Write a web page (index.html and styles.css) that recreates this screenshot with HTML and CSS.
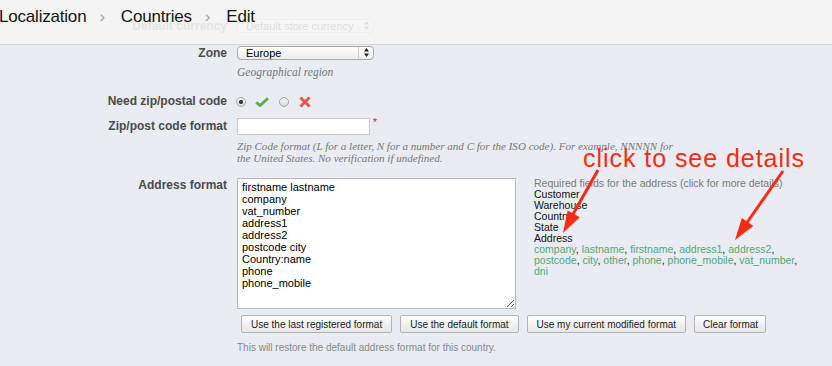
FILE: index.html
```html
<!DOCTYPE html>
<html lang="en">
    <head>
        <link rel="stylesheet" href="styles.css">
        <meta charset="UTF-8">
        <title>Countries &gt; Edit</title>
    </head>
    <body>
        <div class="toolbar">
            <span class="crumb first">Localization</span>
            <span class="sep">&rsaquo;</span>
            <span class="crumb">Countries</span>
            <span class="sep">&rsaquo;</span>
            <span class="crumb">Edit</span>
        </div>

        <form class="country-form">
            <div class="row row-currency">
                <label class="field-label" for="currency">Default currency</label>
                <div class="field">
                    <div class="select-box">
                        <select id="currency"><option>Default store currency</option></select>
                        <svg class="select-arrows" width="5" height="9" viewBox="0 0 5 9"><path d="M0 3.5 L2.5 0 L5 3.5Z M0 5.5 L5 5.5 L2.5 9Z" fill="#222"/></svg>
                    </div>
                </div>
            </div>

            <div class="row row-zone">
                <label class="field-label" for="zone">Zone</label>
                <div class="field">
                    <div class="select-box">
                        <select id="zone"><option>Europe</option></select>
                        <svg class="select-arrows" width="5" height="9" viewBox="0 0 5 9"><path d="M0 3.5 L2.5 0 L5 3.5Z M0 5.5 L5 5.5 L2.5 9Z" fill="#222"/></svg>
                    </div>
                    <p class="hint">Geographical region</p>
                </div>
            </div>

            <div class="row row-need-zip">
                <label class="field-label">Need zip/postal code</label>
                <div class="field switch">
                    <input type="radio" class="radio" name="need-zip" id="need-zip-on" checked>
                    <label for="need-zip-on" class="icon-yes">
                        <svg width="14" height="10" viewBox="0 0 14 10"><path d="M1.2 5.2 L5 8.6 L13 1.2" fill="none" stroke="#5cb043" stroke-width="2.8" stroke-linejoin="round"/></svg>
                    </label>
                    <input type="radio" class="radio" name="need-zip" id="need-zip-off">
                    <label for="need-zip-off" class="icon-no">
                        <svg width="12" height="12" viewBox="0 0 12 12"><path d="M1.5 1.5 L10.5 10.5 M10.5 1.5 L1.5 10.5" fill="none" stroke="#ef5350" stroke-width="3"/></svg>
                    </label>
                </div>
            </div>

            <div class="row row-zip-format">
                <label class="field-label" for="zip-format">Zip/post code format</label>
                <div class="field">
                    <input type="text" class="text-input" id="zip-format"><sup class="required">*</sup>
                    <p class="hint zip-hint">Zip Code format (L for a letter, N for a number and C for the ISO code). For example, NNNNN for the United States. No verification if undefined.</p>
                </div>
            </div>

            <div class="row row-address">
                <label class="field-label" for="address-format">Address format</label>
                <div class="field">
                    <div class="address-wrap">
                        <textarea id="address-format">firstname lastname
company
vat_number
address1
address2
postcode city
Country:name
phone
phone_mobile</textarea>
                        <div class="required-fields">
                            <div class="required-title">Required fields for the address (click for more details)</div>
                            <div>Customer</div>
                            <div>Warehouse</div>
                            <div>Country</div>
                            <div>State</div>
                            <div>Address</div>
                            <div class="field-links">
                                <a>company</a>, <a>lastname</a>, <a>firstname</a>, <a>address1</a>, <a>address2</a>, <a>postcode</a>, <a>city</a>, <a>other</a>, <a>phone</a>, <a>phone_mobile</a>, <a>vat_number</a>, <a>dni</a>
                            </div>
                        </div>
                    </div>
                    <div class="format-buttons">
                        <button type="button">Use the last registered format</button>
                        <button type="button">Use the default format</button>
                        <button type="button">Use my current modified format</button>
                        <button type="button" class="clear-btn">Clear format</button>
                    </div>
                    <p class="note">This will restore the default address format for this country.</p>
                </div>
            </div>
        </form>

        <div class="callout">click to see details</div>
        <svg class="callout-arrows" width="832" height="366" viewBox="0 0 832 366">
            <line x1="598" y1="170" x2="572" y2="216" stroke="#fb2a12" stroke-width="3"/>
            <polygon points="579.8,217.2 567.6,210.4 563,233" fill="#fb2a12"/>
            <line x1="783" y1="171" x2="746" y2="224" stroke="#fb2a12" stroke-width="3"/>
            <polygon points="753.3,225.9 741.9,217.9 735,240" fill="#fb2a12"/>
        </svg>
    </body>
</html>
```

FILE: styles.css
```css
body {
    margin: 0;
    height: 366px;
    overflow: hidden;
    position: relative;
    background: #e9ecf3;
    font-family: "Liberation Sans", Arial, sans-serif;
}

/* breadcrumb bar, sits over the top of the form */
.toolbar {
    position: absolute;
    top: 0;
    left: 0;
    right: 0;
    height: 37px;
    padding-top: 7px;
    display: flex;
    align-items: baseline;
    background: rgba(245, 245, 245, 0.9);
    border-bottom: 1px solid #d9d9d9;
    font-size: 17px;
    line-height: 20px;
    letter-spacing: -0.2px;
    color: #151515;
    z-index: 2;
}
.crumb.first {
    margin-left: -1px;
}
.sep {
    color: #a3a3a3;
    margin: 0 16px 0 13px;
}

.country-form {
    padding-top: 19px;
}
.row {
    display: grid;
    grid-template-columns: 227px 1fr;
    column-gap: 10px;
}
.field-label {
    text-align: right;
    font-weight: bold;
    font-size: 12px;
    line-height: 14px;
    color: #4b4b4b;
}
.field {
    font-size: 11px;
}
.row-zone {
    margin-top: 13px;
}
.row-need-zip {
    margin-top: 16px;
}
.row-need-zip .field-label {
    line-height: 15px;
}
.row-zip-format {
    margin-top: 9px;
}
.row-zip-format .field-label {
    line-height: 17px;
}
.row-address {
    margin-top: 14px;
}
.row-address .field-label {
    line-height: 15px;
}

/* mac style select */
.select-box {
    position: relative;
    width: 137px;
    height: 14px;
}
.select-box select {
    appearance: none;
    -webkit-appearance: none;
    box-sizing: border-box;
    width: 100%;
    height: 14px;
    margin: 0;
    padding: 0 0 0 8px;
    border: 1px solid #a9a9a9;
    border-radius: 4px;
    background: linear-gradient(#ffffff, #ececec);
    font-family: "Liberation Sans", Arial, sans-serif;
    font-size: 11px;
    line-height: 12px;
    color: #000;
}
.select-box::after {
    content: "";
    position: absolute;
    top: 1px;
    bottom: 1px;
    right: 15px;
    border-left: 1px solid #cfcfcf;
}
.select-arrows {
    position: absolute;
    top: 2px;
    right: 5px;
}

.hint {
    margin: 6px 0 0;
    font-family: "Liberation Serif", "Times New Roman", serif;
    font-style: italic;
    font-size: 11.5px;
    line-height: 12px;
    color: #777;
}
.zip-hint {
    width: 442px;
    margin-top: 5px;
    font-size: 11.05px;
}

.switch {
    display: flex;
    align-items: center;
    height: 15px;
    margin-left: -1px;
}
.radio {
    appearance: none;
    -webkit-appearance: none;
    width: 10px;
    height: 10px;
    margin: 0;
    border: 1px solid #a6a6a6;
    border-radius: 50%;
    background: linear-gradient(#fdfdfd, #d9d9d9);
}
.radio:checked {
    background: radial-gradient(circle, #3c3c3c 0 1.8px, transparent 2.4px), linear-gradient(#fdfdfd, #d9d9d9);
}
.switch label {
    display: flex;
}
.icon-yes {
    margin: 0 10px 0 9px;
}
.icon-no {
    margin-left: 10px;
}

.text-input {
    box-sizing: border-box;
    width: 133px;
    height: 17px;
    margin: 0;
    border: 1px solid #c9c9c9;
    background: #fff;
    vertical-align: top;
}
.required {
    color: #c0141a;
    font-size: 10px;
    line-height: 10px;
    margin-left: 3px;
    vertical-align: top;
}

.address-wrap {
    display: flex;
    align-items: flex-start;
}
textarea {
    box-sizing: border-box;
    width: 279px;
    height: 131px;
    margin: 0;
    padding: 2px 4px;
    border: 1px solid #bababa;
    background: #fff;
    font-family: "Liberation Sans", Arial, sans-serif;
    font-size: 11px;
    line-height: 12px;
    color: #000;
    resize: both;
}
.required-fields {
    width: 272px;
    margin-left: 18px;
    font-size: 10.5px;
    line-height: 11px;
    color: #111;
}
.required-title {
    color: #7a7a7a;
}
.field-links a {
    color: #52a873;
}

.format-buttons {
    display: flex;
    gap: 8px;
    margin: 6px 0 0 4px;
}
.format-buttons button {
    height: 18px;
    padding: 0 9px;
    border: 1px solid #b4b4b4;
    border-radius: 2px;
    background: linear-gradient(#ffffff, #e6e6e6);
    font-family: "Liberation Sans", Arial, sans-serif;
    font-size: 10px;
    color: #222;
}
.format-buttons .clear-btn {
    padding: 0 7px 0 8px;
}
.note {
    margin: 9px 0 0;
    font-size: 10px;
    line-height: 12px;
    color: #888;
}

/* annotation drawn on top of the screenshot */
.callout {
    position: absolute;
    left: 583px;
    top: 146px;
    font-size: 25px;
    line-height: 25px;
    letter-spacing: 0.95px;
    color: #fb2a12;
}
.callout-arrows {
    position: absolute;
    top: 0;
    left: 0;
    pointer-events: none;
}
```
